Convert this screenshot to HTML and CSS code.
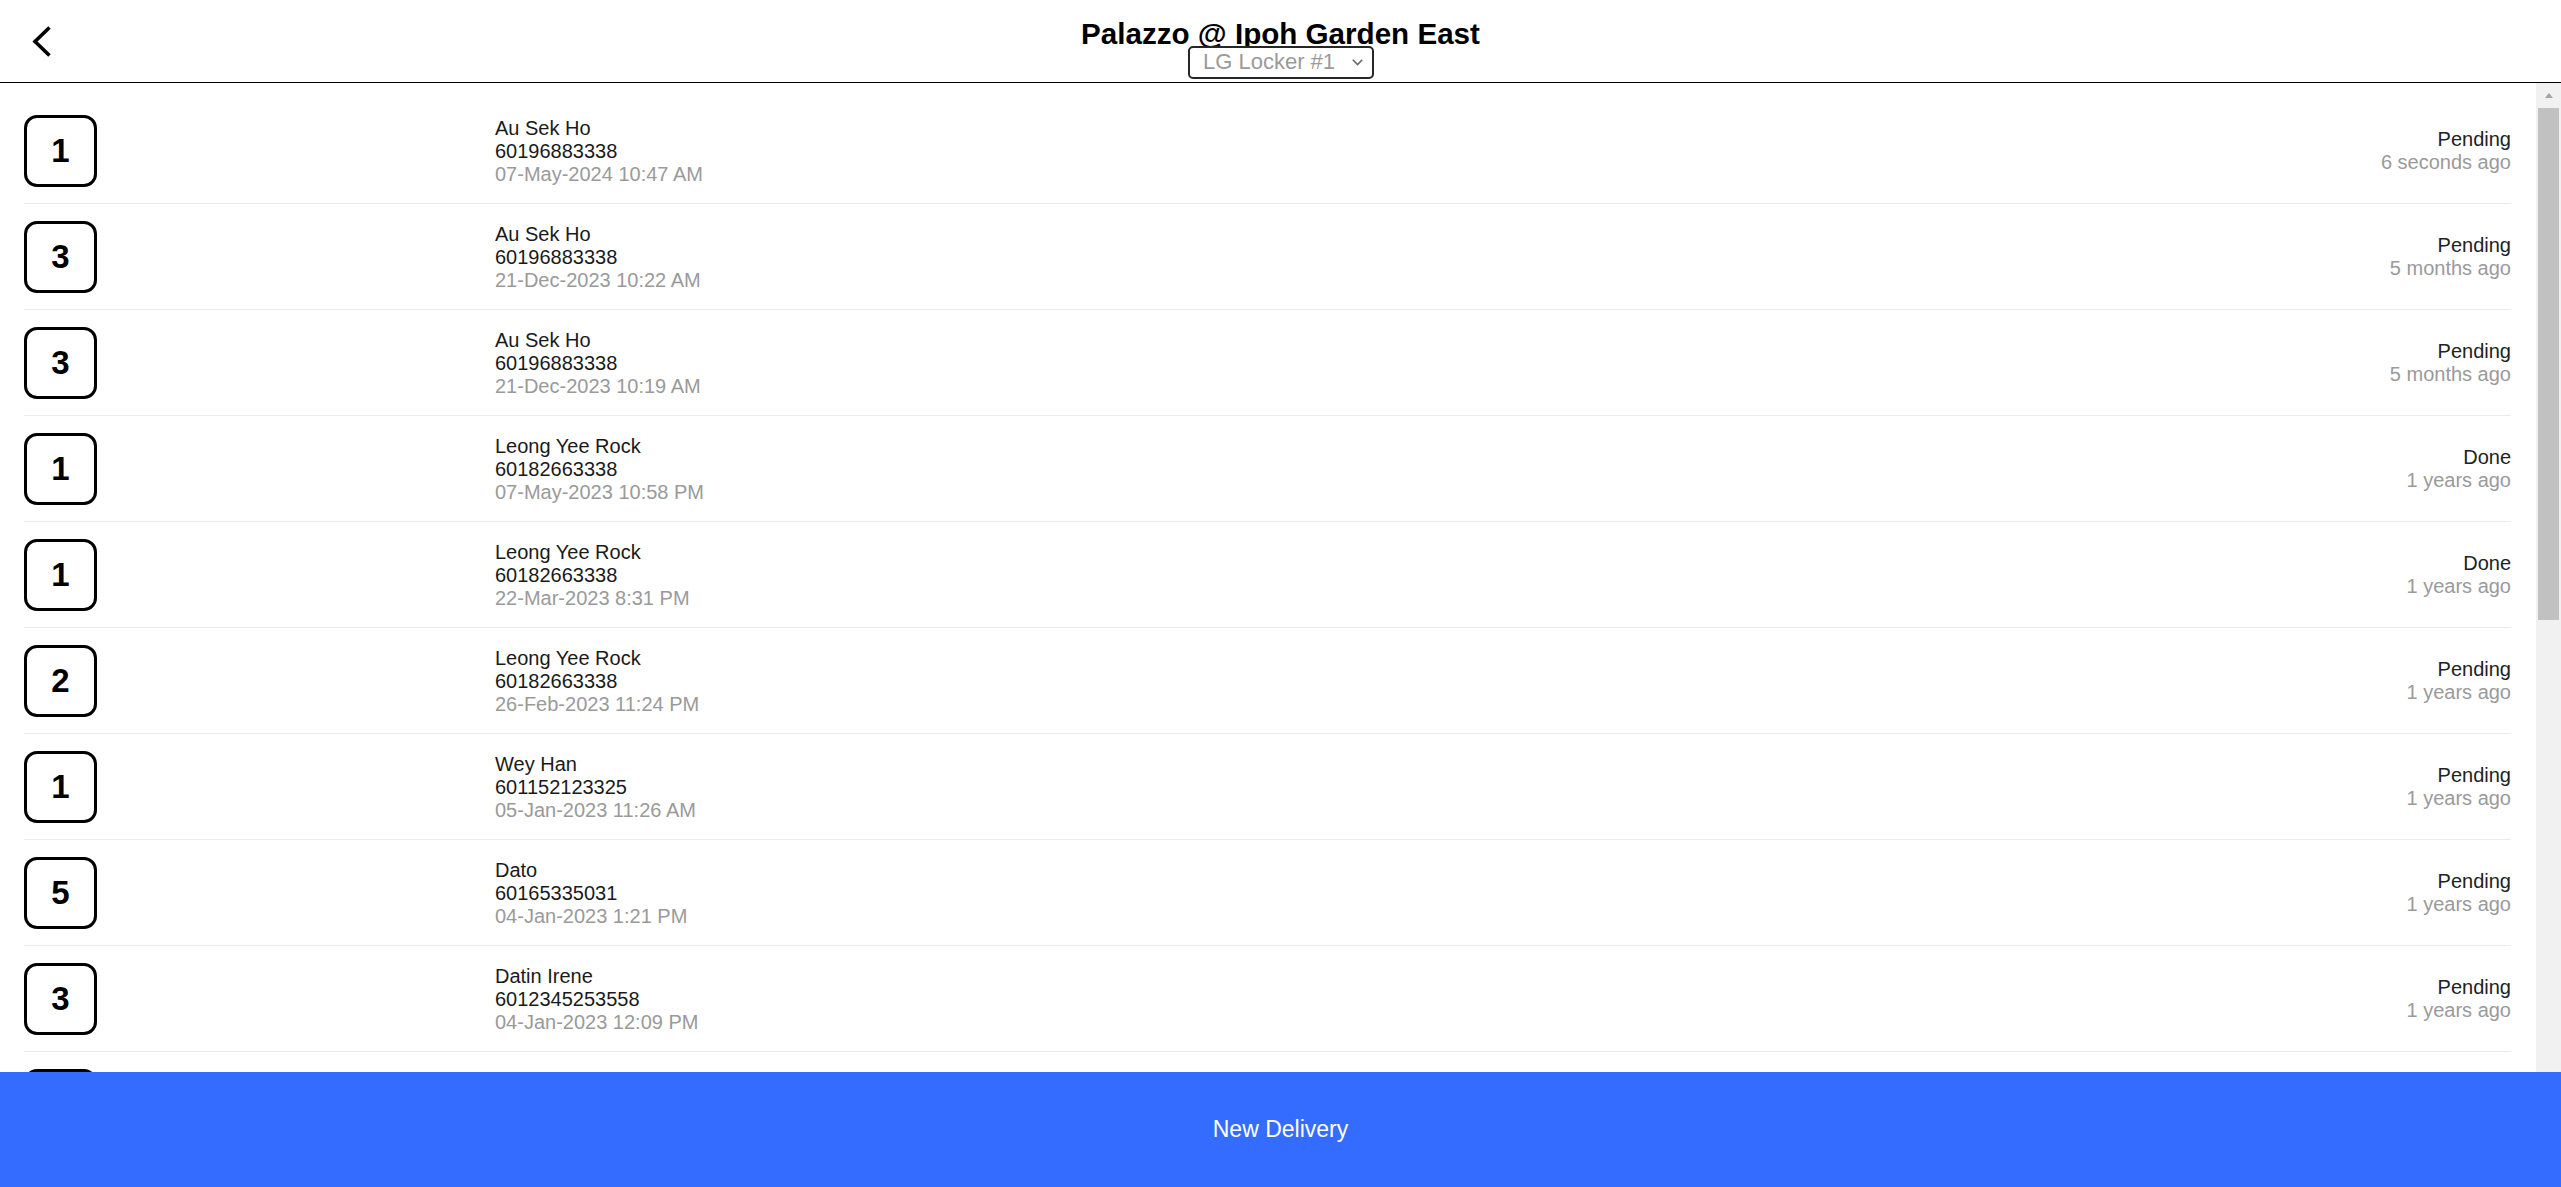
FILE: index.html
```html
<!DOCTYPE html>
<html lang="en">
<head>
<meta charset="utf-8">
<title>Palazzo @ Ipoh Garden East</title>
<link rel="stylesheet" href="styles.css">
</head>
<body>
<header class="topbar">
  <div class="topbar-left">
    <svg class="back-icon" viewBox="0 0 24 36" aria-hidden="true">
      <polyline points="19.5,4.5 5,18.5 19.5,32.5" fill="none" stroke="#000" stroke-width="3.6" stroke-linejoin="miter" stroke-linecap="butt"/>
    </svg>
  </div>
  <div class="topbar-center">
    <h1 class="title">Palazzo @ Ipoh Garden East</h1>
    <div class="locker-select">
      <span>LG Locker #1</span>
      <svg class="select-chevron" viewBox="0 0 11 7" aria-hidden="true">
        <polyline points="0.8,0.8 5.5,5.6 10.2,0.8" fill="none" stroke="#666" stroke-width="1.5"/>
      </svg>
    </div>
  </div>
  <div></div>
</header>

<main class="content">
  <ul class="delivery-list">
    <li class="row">
      <div class="badge">1</div>
      <div class="info"><div class="name">Au Sek Ho</div><div class="phone">60196883338</div><div class="date">07-May-2024 10:47 AM</div></div>
      <div class="status"><div class="state">Pending</div><div class="ago">6 seconds ago</div></div>
    </li>
    <li class="row">
      <div class="badge">3</div>
      <div class="info"><div class="name">Au Sek Ho</div><div class="phone">60196883338</div><div class="date">21-Dec-2023 10:22 AM</div></div>
      <div class="status"><div class="state">Pending</div><div class="ago">5 months ago</div></div>
    </li>
    <li class="row">
      <div class="badge">3</div>
      <div class="info"><div class="name">Au Sek Ho</div><div class="phone">60196883338</div><div class="date">21-Dec-2023 10:19 AM</div></div>
      <div class="status"><div class="state">Pending</div><div class="ago">5 months ago</div></div>
    </li>
    <li class="row">
      <div class="badge">1</div>
      <div class="info"><div class="name">Leong Yee Rock</div><div class="phone">60182663338</div><div class="date">07-May-2023 10:58 PM</div></div>
      <div class="status"><div class="state">Done</div><div class="ago">1 years ago</div></div>
    </li>
    <li class="row">
      <div class="badge">1</div>
      <div class="info"><div class="name">Leong Yee Rock</div><div class="phone">60182663338</div><div class="date">22-Mar-2023 8:31 PM</div></div>
      <div class="status"><div class="state">Done</div><div class="ago">1 years ago</div></div>
    </li>
    <li class="row">
      <div class="badge">2</div>
      <div class="info"><div class="name">Leong Yee Rock</div><div class="phone">60182663338</div><div class="date">26-Feb-2023 11:24 PM</div></div>
      <div class="status"><div class="state">Pending</div><div class="ago">1 years ago</div></div>
    </li>
    <li class="row">
      <div class="badge">1</div>
      <div class="info"><div class="name">Wey Han</div><div class="phone">601152123325</div><div class="date">05-Jan-2023 11:26 AM</div></div>
      <div class="status"><div class="state">Pending</div><div class="ago">1 years ago</div></div>
    </li>
    <li class="row">
      <div class="badge">5</div>
      <div class="info"><div class="name">Dato</div><div class="phone">60165335031</div><div class="date">04-Jan-2023 1:21 PM</div></div>
      <div class="status"><div class="state">Pending</div><div class="ago">1 years ago</div></div>
    </li>
    <li class="row">
      <div class="badge">3</div>
      <div class="info"><div class="name">Datin Irene</div><div class="phone">6012345253558</div><div class="date">04-Jan-2023 12:09 PM</div></div>
      <div class="status"><div class="state">Pending</div><div class="ago">1 years ago</div></div>
    </li>
    <li class="row">
      <div class="badge">2</div>
      <div class="info"><div class="name">Datin Irene</div><div class="phone">6012345253558</div><div class="date">03-Jan-2023 4:45 PM</div></div>
      <div class="status"><div class="state">Done</div><div class="ago">1 years ago</div></div>
    </li>
  </ul>
  <div class="scrollbar" aria-hidden="true">
    <div class="scroll-btn"><div class="scroll-arrow"></div></div>
    <div class="scroll-track"><div class="scroll-thumb"></div></div>
  </div>
</main>

<footer class="footer">New Delivery</footer>
</body>
</html>
```
FILE: styles.css
```css
html, body {
  margin: 0;
  height: 100%;
}

body {
  font-family: "Liberation Sans", Arial, sans-serif;
  display: flex;
  flex-direction: column;
  height: 100vh;
  overflow: hidden;
  background: #fff;
  color: #1a1a1a;
}

.topbar {
  flex: none;
  height: 82px;
  border-bottom: 1px solid #000;
  display: grid;
  grid-template-columns: 1fr auto 1fr;
}

.topbar-left {
  display: flex;
  align-items: center;
  padding-left: 30px;
}

.back-icon {
  display: block;
  width: 24px;
  height: 36px;
}

.topbar-center {
  display: flex;
  flex-direction: column;
  align-items: center;
  padding-top: 19px;
}

.title {
  margin: 0;
  font-size: 29.6px;
  line-height: 29.6px;
  font-weight: 700;
  color: #000;
  white-space: nowrap;
}

.locker-select {
  position: relative;
  margin-top: -3px;
  width: 186px;
  height: 33px;
  box-sizing: border-box;
  border: 2.5px solid #262626;
  border-radius: 5px;
  background: #fff;
  display: flex;
  align-items: center;
  justify-content: space-between;
  padding: 0 9px 0 13.5px;
  font-size: 22px;
  color: #9a9a9a;
}

.select-chevron {
  display: block;
  width: 11px;
  height: 7px;
}

.content {
  flex: 1;
  min-height: 0;
  display: flex;
}

.delivery-list {
  flex: 1;
  min-width: 0;
  list-style: none;
  margin: 0;
  padding: 15px 25px 0 24px;
  overflow: hidden;
}

.row {
  display: grid;
  grid-template-columns: 471px 1fr auto;
  align-items: center;
  padding: 17px 0 16px;
  border-bottom: 1px solid #ebebeb;
}

.badge {
  width: 73px;
  height: 72px;
  box-sizing: border-box;
  border: 3.2px solid #000;
  border-radius: 13px;
  display: flex;
  align-items: center;
  justify-content: center;
  font-size: 33px;
  font-weight: 700;
  color: #000;
}

.info,
.status {
  font-size: 20px;
  line-height: 23px;
}

.name,
.phone {
  color: #1a1a1a;
}

.date {
  color: #9a9a9a;
}

.status {
  text-align: right;
}

.state {
  color: #222;
}

.ago {
  color: #9a9a9a;
}

.scrollbar {
  flex: none;
  width: 25px;
  background: #f1f1f1;
  display: flex;
  flex-direction: column;
}

.scroll-btn {
  height: 25px;
  display: flex;
  align-items: center;
  justify-content: center;
}

.scroll-arrow {
  width: 0;
  height: 0;
  border-left: 4.5px solid transparent;
  border-right: 4.5px solid transparent;
  border-bottom: 5px solid #a3a3a3;
}

.scroll-track {
  flex: 1;
}

.scroll-thumb {
  height: 512px;
  margin: 0 2px;
  background: #c1c1c1;
}

.footer {
  position: fixed;
  left: 0;
  right: 0;
  bottom: 0;
  height: 115px;
  background: #336cff;
  color: #fff;
  font-size: 23px;
  display: flex;
  align-items: center;
  justify-content: center;
}
```
